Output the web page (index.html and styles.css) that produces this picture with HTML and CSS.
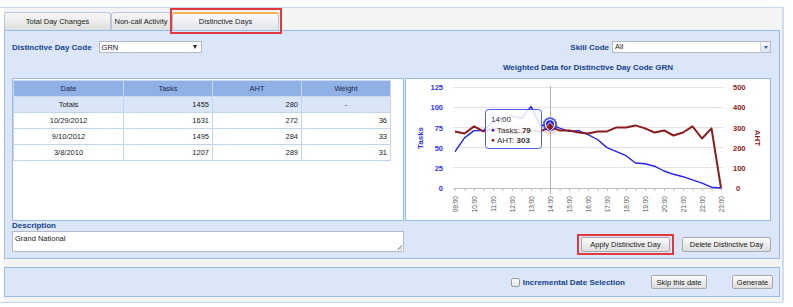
FILE: index.html
```html
<!DOCTYPE html>
<html lang="en">
<head>
    <meta charset="UTF-8">
    <meta name="viewport" content="width=device-width, initial-scale=1.0">
    <title>Distinctive Days</title>
    <link rel="stylesheet" href="styles.css">
</head>
<body>
    <div class="frame">
        <div class="tab-strip">
            <div class="tab tab-total">Total Day Changes</div>
            <div class="tab tab-noncall">Non-call Activity</div>
            <div class="tab tab-active highlight">Distinctive Days</div>
        </div>

        <div class="panel main-panel">
            <div class="top-row">
                <div class="field">
                    <span class="field-label">Distinctive Day Code</span>
                    <div class="combo combo-code">
                        <span>GRN</span>
                        <span class="combo-arrow"></span>
                    </div>
                </div>
                <div class="field">
                    <span class="field-label">Skill Code</span>
                    <div class="combo combo-skill">
                        <span>All</span>
                        <span class="combo-trigger"><span></span></span>
                    </div>
                </div>
            </div>

            <div class="content-grid">
                <div class="chart-title">Weighted Data for Distinctive Day Code GRN</div>

                <div class="grid-box">
                    <table class="data-table">
                        <colgroup>
                            <col class="col-date">
                            <col class="col-num">
                            <col class="col-num">
                            <col class="col-num">
                        </colgroup>
                        <thead>
                            <tr>
                                <th>Date</th>
                                <th>Tasks</th>
                                <th>AHT</th>
                                <th>Weight</th>
                            </tr>
                        </thead>
                        <tbody>
                            <tr class="totals">
                                <td class="center">Totals</td>
                                <td>1455</td>
                                <td>280</td>
                                <td class="center">-</td>
                            </tr>
                            <tr>
                                <td class="center">10/29/2012</td>
                                <td>1631</td>
                                <td>272</td>
                                <td>36</td>
                            </tr>
                            <tr>
                                <td class="center">9/10/2012</td>
                                <td>1495</td>
                                <td>284</td>
                                <td>33</td>
                            </tr>
                            <tr>
                                <td class="center">3/8/2010</td>
                                <td>1207</td>
                                <td>289</td>
                                <td>31</td>
                            </tr>
                        </tbody>
                    </table>
                </div>

                <div class="chart-box">
                    <svg class="chart" width="364" height="141" viewBox="1 1 364 141">
                        <!-- grid -->
                        <g stroke="#e3e3e3" stroke-width="1">
                            <line x1="48" y1="9.5" x2="318" y2="9.5"/>
                            <line x1="48" y1="29.5" x2="318" y2="29.5"/>
                            <line x1="48" y1="49.5" x2="318" y2="49.5"/>
                            <line x1="48" y1="69.5" x2="318" y2="69.5"/>
                            <line x1="48" y1="89.5" x2="318" y2="89.5"/>
                        </g>
                        <line x1="145.5" y1="8" x2="145.5" y2="116" stroke="#b4b4b4"/>
                        <line x1="48" y1="110.5" x2="318" y2="110.5" stroke="#c0c0c0"/>
                        <path stroke="#c0c0c0" d="M50.5 110v3M60 110v3M69.5 110v3M79 110v3M88.5 110v3M98 110v3M107.5 110v3M117 110v3M126.5 110v3M136 110v3M145.5 110v3M155 110v3M164.5 110v3M174 110v3M183.5 110v3M193 110v3M202.5 110v3M212 110v3M221.5 110v3M231 110v3M240.5 110v3M250 110v3M259.5 110v3M269 110v3M278.5 110v3M288 110v3M297.5 110v3M307 110v3M316.5 110v3"/>

                        <!-- hover halos -->
                        <circle cx="145" cy="48.8" r="8" fill="#c86a6a" fill-opacity="0.25"/>

                        <!-- series -->
                        <polyline class="line-tasks" points="50,73.6 59.5,59.9 69,52.6 78.5,52.6 88,43.7 97.5,40.5 107,38.1 116.5,40.5 126,28.4 135.5,47.8 145,46.2 154.5,50.2 164,53.4 173.5,52.6 183,56.7 192.5,61.5 202,69.6 211.5,73.6 221,77.7 230.5,85 240,85.8 249.5,88.2 259,93 268.5,96.3 278,98.7 287.5,101.9 297,105.2 306.5,109.2 316,110"/>
                        <polyline class="line-aht" points="50,53.4 59.5,55.5 69,48.4 78.5,53.4 88,50.4 97.5,51.4 107,55.5 116.5,54.5 126,52.4 135.5,53.4 145,48.8 154.5,52.4 164,52.4 173.5,54.5 183,55.5 192.5,53.4 202,53.4 211.5,49.4 221,49.4 230.5,47.4 240,50.4 249.5,54.5 259,52.4 268.5,57.5 278,54.5 287.5,48.4 297,60.5 306.5,50.4 316,110"/>

                        <!-- hover markers -->
                        <circle cx="145" cy="46.2" r="7" fill="#2a35e0" fill-opacity="0.8"/>
                        <circle cx="145" cy="46.2" r="4.6" fill="#2121ee" stroke="#fff" stroke-width="1.2"/>
                        <path d="M145 44.3L149 48.8L145 53.3L141 48.8Z" fill="#8b1c1c" stroke="#fff" stroke-width="0.8"/>

                        <!-- y axis labels -->
                        <g class="axis-left" text-anchor="end">
                            <text x="38" y="12">125</text>
                            <text x="38" y="32">100</text>
                            <text x="38" y="52.5">75</text>
                            <text x="38" y="72.5">50</text>
                            <text x="38" y="92.5">25</text>
                            <text x="38" y="113">0</text>
                        </g>
                        <g class="axis-right">
                            <text x="328" y="12">500</text>
                            <text x="328" y="32">400</text>
                            <text x="328" y="52.5">300</text>
                            <text x="328" y="72.5">200</text>
                            <text x="328" y="92.5">100</text>
                            <text x="331" y="113">0</text>
                        </g>
                        <text class="title-tasks" transform="translate(18 60) rotate(-90)" text-anchor="middle">Tasks</text>
                        <text class="title-aht" transform="translate(350 60) rotate(90)" text-anchor="middle">AHT</text>

                        <!-- x axis labels -->
                        <g class="axis-x" text-anchor="end">
                            <text transform="translate(52.5 118) rotate(-90)">09:00</text>
                            <text transform="translate(71.5 118) rotate(-90)">10:00</text>
                            <text transform="translate(90.5 118) rotate(-90)">11:00</text>
                            <text transform="translate(109.5 118) rotate(-90)">12:00</text>
                            <text transform="translate(128.5 118) rotate(-90)">13:00</text>
                            <text transform="translate(147.5 118) rotate(-90)">14:00</text>
                            <text transform="translate(166.5 118) rotate(-90)">15:00</text>
                            <text transform="translate(185.5 118) rotate(-90)">16:00</text>
                            <text transform="translate(204.5 118) rotate(-90)">17:00</text>
                            <text transform="translate(223.5 118) rotate(-90)">18:00</text>
                            <text transform="translate(242.5 118) rotate(-90)">19:00</text>
                            <text transform="translate(261.5 118) rotate(-90)">20:00</text>
                            <text transform="translate(280.5 118) rotate(-90)">21:00</text>
                            <text transform="translate(299.5 118) rotate(-90)">22:00</text>
                            <text transform="translate(318.5 118) rotate(-90)">23:00</text>
                        </g>

                        <!-- tooltip -->
                        <g class="tooltip">
                            <rect x="80.5" y="31.5" width="56" height="39" rx="3" fill="#fff" fill-opacity="0.85" stroke="#4b5ff0"/>
                            <text x="86" y="44" font-size="6.5" fill="#444">14:00</text>
                            <circle cx="88" cy="52.3" r="1.4" fill="#2121ee"/>
                            <text x="92" y="55">Tasks: <tspan font-weight="bold">79</tspan></text>
                            <circle cx="88" cy="62.3" r="1.4" fill="#8b1c1c"/>
                            <text x="92" y="65">AHT: <tspan font-weight="bold">303</tspan></text>
                        </g>
                    </svg>
                </div>
            </div>

            <div class="footer-row">
                <div class="desc">
                    <div class="desc-label">Description</div>
                    <div class="textarea">Grand National<span class="grip"></span></div>
                </div>
                <div class="actions">
                    <button class="btn btn-wide highlight">Apply Distinctive Day</button>
                    <button class="btn btn-wide">Delete Distinctive Day</button>
                </div>
            </div>
        </div>

        <div class="panel bottom-panel">
            <div class="check"><span class="checkbox"></span>Incremental Date Selection</div>
            <button class="btn btn-skip">Skip this date</button>
            <button class="btn btn-generate">Generate</button>
        </div>
    </div>
</body>
</html>
```

FILE: styles.css
```css
body {
    margin: 0;
    font-family: "Liberation Sans", Arial, sans-serif;
    font-size: 7.5px;
    color: #1a1a1a;
    background: #fff;
}

.frame {
    width: 776px;
    margin-top: 7px;
    padding: 0 2px 5px 4px;
    border-top: 1px solid #c6d6ee;
    border-right: 2px solid #d0dcef;
    border-bottom: 1px solid #c6d6ee;
    border-bottom-right-radius: 3px;
    background: linear-gradient(to right, #fff 4px, #f4f4f4 4px);
}

/* tabs */
.tab-strip {
    height: 22px;
    display: flex;
    align-items: flex-end;
}
.tab {
    height: 18px;
    box-sizing: border-box;
    border: 1px solid #b9c6d9;
    border-bottom: none;
    border-radius: 3px 3px 0 0;
    background: linear-gradient(#f8f8f8, #e9e9e9 60%, #dedede);
    line-height: 17px;
    text-align: center;
    color: #1a1a1a;
}
.tab-total {
    width: 107px;
}
.tab-noncall {
    width: 60px;
}
.tab-active {
    width: 107px;
    margin-left: 1px;
    border-top: 2px solid #f3b04f;
    line-height: 15px;
    background: linear-gradient(#fafafa, #eceef2 60%, #e1e5ec);
}

.highlight {
    position: relative;
}
.highlight::after {
    content: '';
    position: absolute;
    top: -4px;
    bottom: -4px;
    left: -5px;
    right: -5px;
    border: 2px solid #e2393c;
    pointer-events: none;
}
.tab-active.highlight::after {
    top: -6px;
    bottom: -4px;
    left: -3px;
    right: -4px;
}

/* panels */
.panel {
    box-sizing: border-box;
    width: 776px;
    border: 1px solid #99bbe8;
    background: #dbe6f8;
}
.main-panel {
    padding: 10px 8px 6px 7px;
}

.top-row {
    height: 12px;
    display: flex;
    justify-content: space-between;
    align-items: center;
}
.field {
    display: flex;
    align-items: center;
}
.field-label,
.desc-label,
.chart-title,
.check {
    font-size: 8px;
    font-weight: bold;
    color: #15428b;
}
.combo {
    box-sizing: border-box;
    height: 12px;
    background: #fff;
    border: 1px solid #b5b8c8;
    display: flex;
    justify-content: space-between;
    align-items: center;
    padding-left: 2px;
}
.combo-code {
    width: 103px;
    margin-left: 7px;
    padding-right: 4px;
}
.combo-arrow {
    width: 0;
    height: 0;
    border-top: 4px solid #222;
    border-left: 2.5px solid transparent;
    border-right: 2.5px solid transparent;
}
.combo-skill {
    width: 159px;
    margin-left: 3px;
    align-items: stretch;
    line-height: 10px;
}
.combo-trigger {
    width: 9px;
    border-left: 1px solid #d0d8e6;
    background: linear-gradient(#f5f8fc, #dde6f3);
    display: flex;
    align-items: center;
    justify-content: center;
}
.combo-trigger span {
    width: 0;
    height: 0;
    border-top: 3px solid #3a5f9e;
    border-left: 2px solid transparent;
    border-right: 2px solid transparent;
}

/* table + chart */
.content-grid {
    display: grid;
    grid-template-columns: 392px 366px;
    column-gap: 1px;
    row-gap: 6px;
    margin-top: 10px;
}
.chart-title {
    grid-column: 2;
    text-align: center;
    line-height: 9px;
    height: 9px;
}
.grid-box,
.chart-box {
    box-sizing: border-box;
    height: 143px;
    background: #fff;
    border: 1px solid #99bbe8;
}
.grid-box {
    grid-column: 1;
    padding-top: 1px;
}
.chart-box {
    grid-column: 2;
}
.chart {
    display: block;
}

.data-table {
    width: 377px;
    border-collapse: collapse;
    table-layout: fixed;
}
.col-date {
    width: 110px;
}
.col-num {
    width: 89px;
}
.data-table th,
.data-table td {
    height: 15px;
    padding: 0 3px;
    line-height: 15px;
    border: 1px solid #c3d4ee;
    text-align: right;
}
.data-table th {
    background: #8fb1e6;
    border-color: #c8d9f2;
    font-weight: normal;
    text-align: center;
    color: #1b2b4b;
}
.data-table .totals td {
    background: #dae6f8;
}
.data-table .center {
    text-align: center;
}

.chart text {
    font-family: "Liberation Sans", Arial, sans-serif;
}
.axis-left text,
.title-tasks {
    font-size: 7.5px;
    font-weight: bold;
    fill: #3030f5;
}
.axis-right text,
.title-aht {
    font-size: 7.5px;
    font-weight: bold;
    fill: #8b1c1c;
}
.title-tasks,
.title-aht {
    font-size: 8px;
}
.axis-x text {
    font-size: 6.5px;
    fill: #555;
}
.line-tasks {
    fill: none;
    stroke: #2121f0;
    stroke-width: 1.4;
    stroke-linejoin: round;
}
.line-aht {
    fill: none;
    stroke: #8b1c1c;
    stroke-width: 2;
    stroke-linejoin: round;
}
.tooltip text {
    font-size: 8px;
    fill: #333;
}

/* description and actions */
.footer-row {
    display: flex;
    justify-content: space-between;
    align-items: flex-end;
}
.desc-label {
    line-height: 10px;
    height: 10px;
}
.textarea {
    position: relative;
    box-sizing: border-box;
    width: 392px;
    height: 21px;
    padding: 2px 2px;
    background: #fff;
    border: 1px solid #b5b8c8;
    line-height: 9px;
}
.grip {
    position: absolute;
    right: 1px;
    bottom: 1px;
    width: 5px;
    height: 5px;
    background: linear-gradient(135deg, transparent 50%, #aaa 50%, #aaa 62%, transparent 62%, transparent 75%, #aaa 75%, #aaa 87%, transparent 87%);
}
.actions {
    display: flex;
    gap: 12px;
}

.btn {
    box-sizing: border-box;
    height: 15px;
    padding: 0;
    font-family: "Liberation Sans", Arial, sans-serif;
    font-size: 7.5px;
    color: #1a1a1a;
    border: 1px solid #a9a9a9;
    border-radius: 2px;
    background: linear-gradient(#fcfcfc, #ececec 50%, #dedede);
}
.btn-wide {
    width: 89px;
}

/* bottom bar */
.bottom-panel {
    height: 30px;
    margin-top: 8px;
    padding-right: 6px;
    display: flex;
    align-items: center;
    justify-content: flex-end;
}
.check {
    display: flex;
    align-items: center;
    gap: 3px;
}
.checkbox {
    box-sizing: border-box;
    width: 9px;
    height: 9px;
    border: 1px solid #9d9d9d;
    border-radius: 2px;
    background: linear-gradient(#fff, #e2e2e2);
}
.btn-skip {
    width: 56px;
    height: 14px;
    margin-left: 26px;
}
.btn-generate {
    width: 41px;
    height: 14px;
    margin-left: 25px;
}
```
